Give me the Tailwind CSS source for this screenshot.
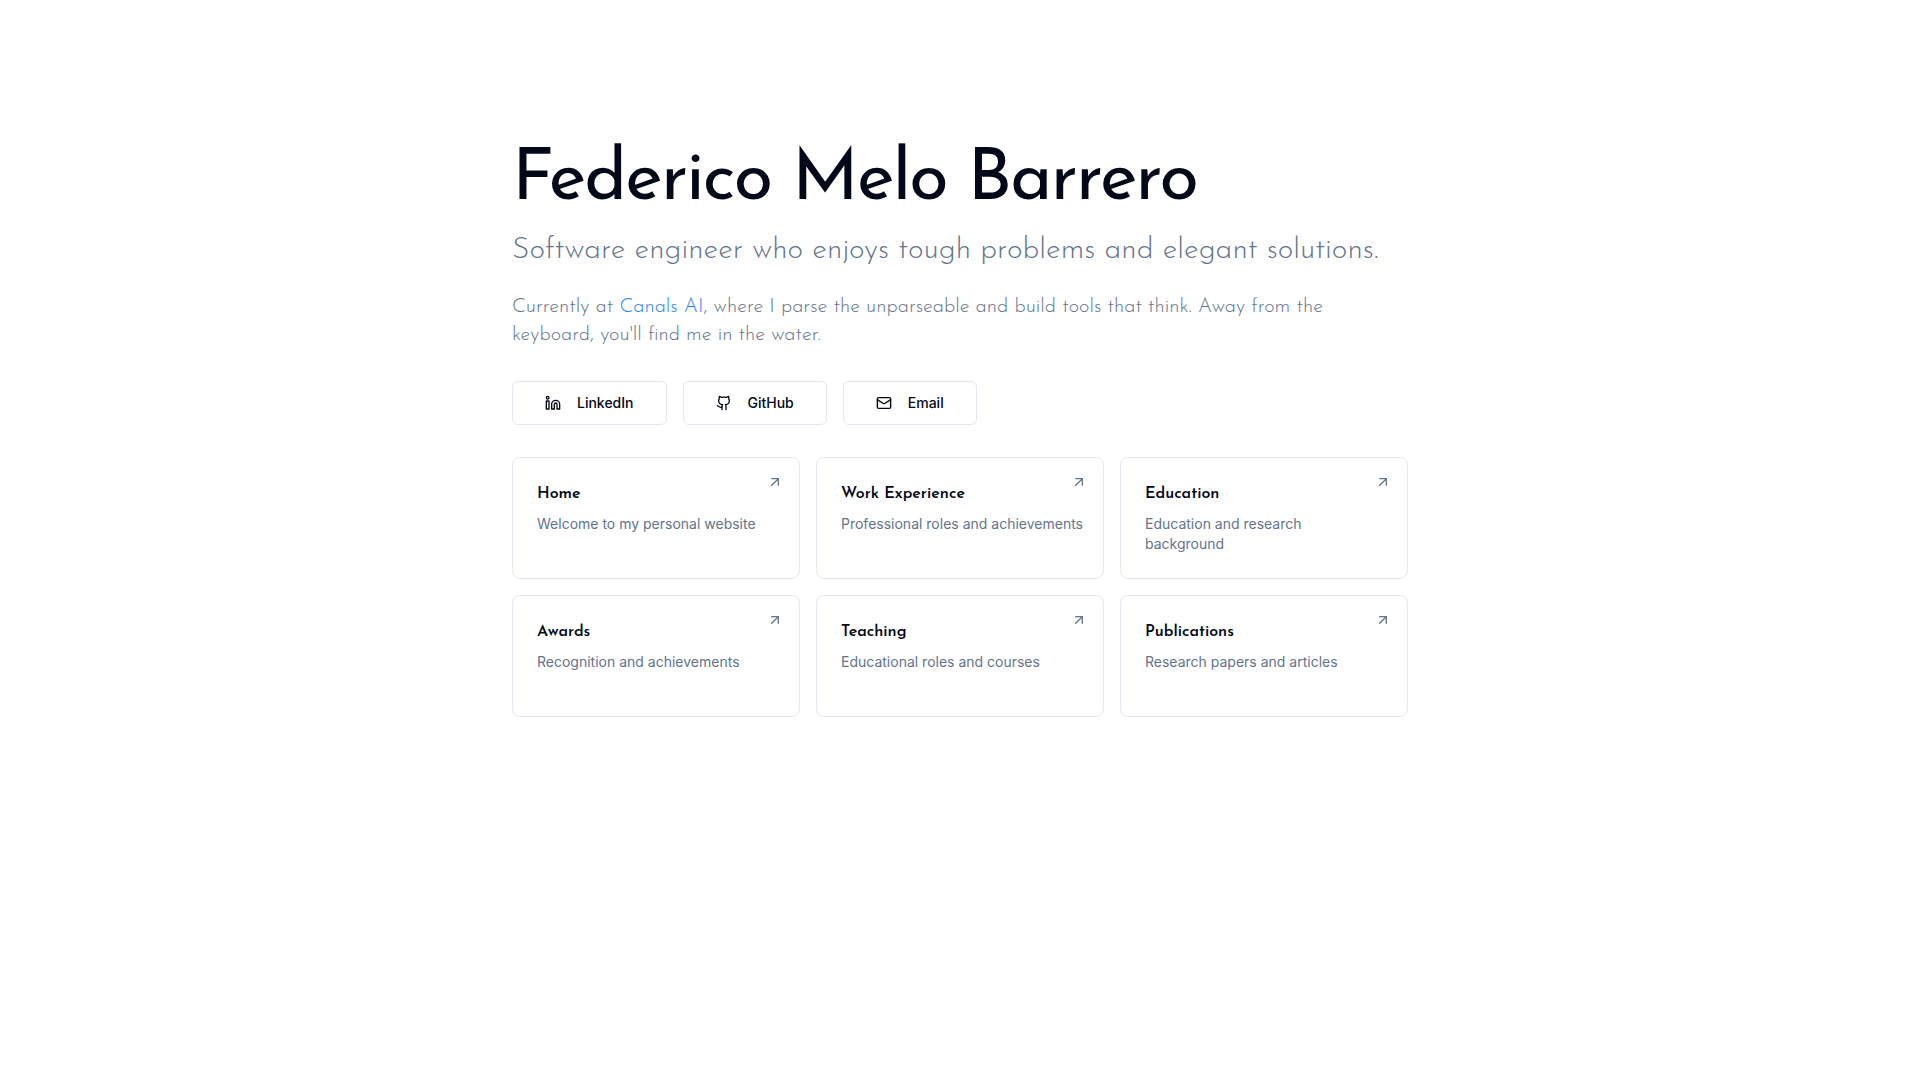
<!DOCTYPE html>
<html lang="en">
<head>
<meta charset="utf-8">
<meta name="viewport" content="width=device-width, initial-scale=1">
<title>Federico Melo Barrero</title>
<script src="https://cdn.jsdelivr.net/npm/@tailwindcss/browser@4"></script>
</head>
<body class="min-h-screen bg-white font-['Inter',sans-serif] text-[#020817]">
<main class="mx-auto max-w-4xl pt-[145px] pb-16">
  <header class="font-['Josefin_Sans','Lato',sans-serif]">
    <h1 class="text-7xl leading-[72px] font-normal tracking-tight">Federico Melo Barrero</h1>
    <p class="mt-4 text-3xl leading-9 font-light text-[#64748b]">Software engineer who enjoys tough problems and elegant solutions.</p>
    <p class="mt-6 text-xl leading-7 font-light text-[#64748b]">Currently at <a href="#canals" class="text-blue-500">Canals AI</a>, where I parse the unparseable and build tools that think. Away from the keyboard, you'll find me in the water.</p>
  </header>

  <nav aria-label="Contact" class="mt-8 flex flex-wrap gap-4 text-sm font-medium">
    <a href="#linkedin" class="flex h-11 items-center gap-4 rounded-md border border-slate-200 px-8">
      <svg class="size-4" viewBox="0 0 24 24" fill="none" stroke="currentColor" stroke-width="2" stroke-linecap="round" stroke-linejoin="round"><path d="M16 8a6 6 0 0 1 6 6v7h-4v-7a2 2 0 0 0-2-2 2 2 0 0 0-2 2v7h-4v-7a6 6 0 0 1 6-6z"/><rect width="4" height="12" x="2" y="9"/><circle cx="4" cy="4" r="2"/></svg>
      LinkedIn</a>
    <a href="#github" class="flex h-11 items-center gap-4 rounded-md border border-slate-200 px-8">
      <svg class="size-4" viewBox="0 0 24 24" fill="none" stroke="currentColor" stroke-width="2" stroke-linecap="round" stroke-linejoin="round"><path d="M15 22v-4a4.800 4.800 0 0 0-1-3.500c3 0 6-2 6-5.500.08-1.250-.27-2.480-1-3.500.28-1.150.28-2.350 0-3.500 0 0-1 0-3 1.500-2.640-.5-5.360-.5-8 0C6 2 5 2 5 2c-.3 1.150-.3 2.350 0 3.500A5.403 5.403 0 0 0 4 9c0 3.500 3 5.500 6 5.500-.39.490-.68 1.050-.85 1.650-.17.600-.22 1.230-.15 1.850v4"/><path d="M9 18c-4.510 2-5-2-7-2"/></svg>
      GitHub</a>
    <a href="#email" class="flex h-11 items-center gap-4 rounded-md border border-slate-200 px-8">
      <svg class="size-4" viewBox="0 0 24 24" fill="none" stroke="currentColor" stroke-width="2" stroke-linecap="round" stroke-linejoin="round"><rect width="20" height="16" x="2" y="4" rx="2"/><path d="m22 7-8.970 5.700a1.940 1.940 0 0 1-2.060 0L2 7"/></svg>
      Email</a>
  </nav>

  <section aria-label="Sections" class="mt-8 grid auto-rows-fr grid-cols-3 gap-4">
    <a href="#home" class="relative rounded-lg border border-slate-200 p-6">
      <h2 class="font-['Josefin_Sans','Lato',sans-serif] text-base leading-6 font-semibold">Home</h2>
      <p class="mt-2 text-sm leading-5 text-[#64748b]">Welcome to my personal website</p>
      <svg class="absolute top-4 right-4 size-4 text-[#64748b]" viewBox="0 0 24 24" fill="none" stroke="currentColor" stroke-width="2" stroke-linecap="round" stroke-linejoin="round"><path d="M7 7h10v10"/><path d="M7 17 17 7"/></svg>
    </a>
    <a href="#work" class="relative rounded-lg border border-slate-200 p-6">
      <h2 class="font-['Josefin_Sans','Lato',sans-serif] text-base leading-6 font-semibold">Work Experience</h2>
      <p class="mt-2 text-sm leading-5 whitespace-nowrap text-[#64748b]">Professional roles and achievements</p>
      <svg class="absolute top-4 right-4 size-4 text-[#64748b]" viewBox="0 0 24 24" fill="none" stroke="currentColor" stroke-width="2" stroke-linecap="round" stroke-linejoin="round"><path d="M7 7h10v10"/><path d="M7 17 17 7"/></svg>
    </a>
    <a href="#education" class="relative rounded-lg border border-slate-200 p-6">
      <h2 class="font-['Josefin_Sans','Lato',sans-serif] text-base leading-6 font-semibold">Education</h2>
      <p class="mt-2 text-sm leading-5 text-[#64748b]">Education and research background</p>
      <svg class="absolute top-4 right-4 size-4 text-[#64748b]" viewBox="0 0 24 24" fill="none" stroke="currentColor" stroke-width="2" stroke-linecap="round" stroke-linejoin="round"><path d="M7 7h10v10"/><path d="M7 17 17 7"/></svg>
    </a>
    <a href="#awards" class="relative rounded-lg border border-slate-200 p-6">
      <h2 class="font-['Josefin_Sans','Lato',sans-serif] text-base leading-6 font-semibold">Awards</h2>
      <p class="mt-2 text-sm leading-5 text-[#64748b]">Recognition and achievements</p>
      <svg class="absolute top-4 right-4 size-4 text-[#64748b]" viewBox="0 0 24 24" fill="none" stroke="currentColor" stroke-width="2" stroke-linecap="round" stroke-linejoin="round"><path d="M7 7h10v10"/><path d="M7 17 17 7"/></svg>
    </a>
    <a href="#teaching" class="relative rounded-lg border border-slate-200 p-6">
      <h2 class="font-['Josefin_Sans','Lato',sans-serif] text-base leading-6 font-semibold">Teaching</h2>
      <p class="mt-2 text-sm leading-5 text-[#64748b]">Educational roles and courses</p>
      <svg class="absolute top-4 right-4 size-4 text-[#64748b]" viewBox="0 0 24 24" fill="none" stroke="currentColor" stroke-width="2" stroke-linecap="round" stroke-linejoin="round"><path d="M7 7h10v10"/><path d="M7 17 17 7"/></svg>
    </a>
    <a href="#publications" class="relative rounded-lg border border-slate-200 p-6">
      <h2 class="font-['Josefin_Sans','Lato',sans-serif] text-base leading-6 font-semibold">Publications</h2>
      <p class="mt-2 text-sm leading-5 text-[#64748b]">Research papers and articles</p>
      <svg class="absolute top-4 right-4 size-4 text-[#64748b]" viewBox="0 0 24 24" fill="none" stroke="currentColor" stroke-width="2" stroke-linecap="round" stroke-linejoin="round"><path d="M7 7h10v10"/><path d="M7 17 17 7"/></svg>
    </a>
  </section>
</main>
</body>
</html>
